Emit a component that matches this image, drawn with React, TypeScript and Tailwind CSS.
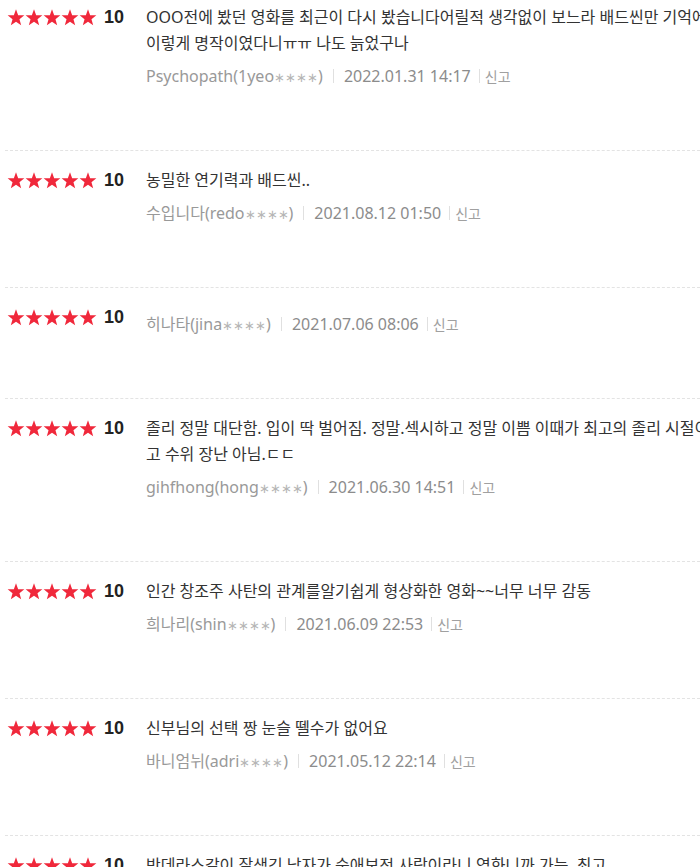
import { ReactElement } from "react"

type Review = {
  lines: string[]
  nick: string
  id: string
  date: string
}

const reviews: Review[] = [
  {
    lines: [
      "OOO전에 봤던 영화를 최근이 다시 봤습니다어릴적 생각없이 보느라 배드씬만 기억에 남았었는데",
      "이렇게 명작이였다니ㅠㅠ 나도 늙었구나",
    ],
    nick: "Psychopath",
    id: "1yeo",
    date: "2022.01.31 14:17",
  },
  { lines: ["농밀한 연기력과 배드씬.."], nick: "수입니다", id: "redo", date: "2021.08.12 01:50" },
  { lines: [], nick: "히나타", id: "jina", date: "2021.07.06 08:06" },
  {
    lines: [
      "졸리 정말 대단함. 입이 딱 벌어짐. 정말.섹시하고 정말 이쁨 이때가 최고의 졸리 시절이",
      "고 수위 장난 아님.ㄷㄷ",
    ],
    nick: "gihfhong",
    id: "hong",
    date: "2021.06.30 14:51",
  },
  {
    lines: ["인간 창조주 사탄의 관계를알기쉽게 형상화한 영화~~너무 너무 감동"],
    nick: "희나리",
    id: "shin",
    date: "2021.06.09 22:53",
  },
  { lines: ["신부님의 선택 짱 눈슬 뗄수가 없어요"], nick: "바니엄뉘", id: "adri", date: "2021.05.12 22:14" },
  {
    lines: ["반데라스같이 잘생긴 남자가 순애보적 사랑이라니 영화니까 가능. 최고"],
    nick: "영화광",
    id: "movi",
    date: "2021.04.28 19:02",
  },
]

const Star = () => (
  <svg width="18" height="17" viewBox="0 0 24 23" className="shrink-0">
    <polygon
      points="12,0.5 14.9,8.3 23.3,8.6 16.7,13.8 19,21.9 12,17.2 5,21.9 7.3,13.8 0.7,8.6 9.1,8.3"
      fill="#f0283b"
    />
  </svg>
)

const Row = ({ review }: { review: Review }): ReactElement => {
  return (
    <div className="ml-[5px] flex border-t border-dashed border-[#e3e3e3] pt-4 pb-[64px]">
      <div className="flex h-[26px] w-[141px] shrink-0 items-center">
        <div className="ml-[2px] flex items-center">
          <Star />
          <Star />
          <Star />
          <Star />
          <Star />
        </div>
        <span className="ml-[7px] font-['Liberation_Sans',sans-serif] text-[18px] font-bold leading-none text-[#222]">
          10
        </span>
      </div>
      <div className="min-w-0">
        {review.lines.map((l, i) => (
          <p key={i} className="whitespace-nowrap text-[16px] leading-[26px] text-[#333]">
            {l}
          </p>
        ))}
        <div className="mt-[10px] flex h-[20px] items-center whitespace-nowrap text-[16px] text-[#999]">
          <span>
            {review.nick}({review.id}
            <span className="text-[13px] text-[#b5b5b5]">∗∗∗∗</span>)
          </span>
          <span className="mx-[10px] h-[14px] w-px bg-[#e0e0e0]" />
          <span className="text-[#8c8c8c]">{review.date}</span>
          <span className="mr-[5px] ml-[8px] h-[14px] w-px bg-[#e0e0e0]" />
          <span className="text-[14px] text-[#a0a0a0]">신고</span>
        </div>
      </div>
    </div>
  )
}

export default function App() {
  return (
    <div className="h-[867px] w-[700px] overflow-hidden bg-white font-['Noto_Sans','Noto_Sans_CJK_KR',sans-serif]">
      <div className="-mt-[13px]">
        {reviews.map((r, i) => (
          <Row key={i} review={r} />
        ))}
      </div>
    </div>
  )
}
